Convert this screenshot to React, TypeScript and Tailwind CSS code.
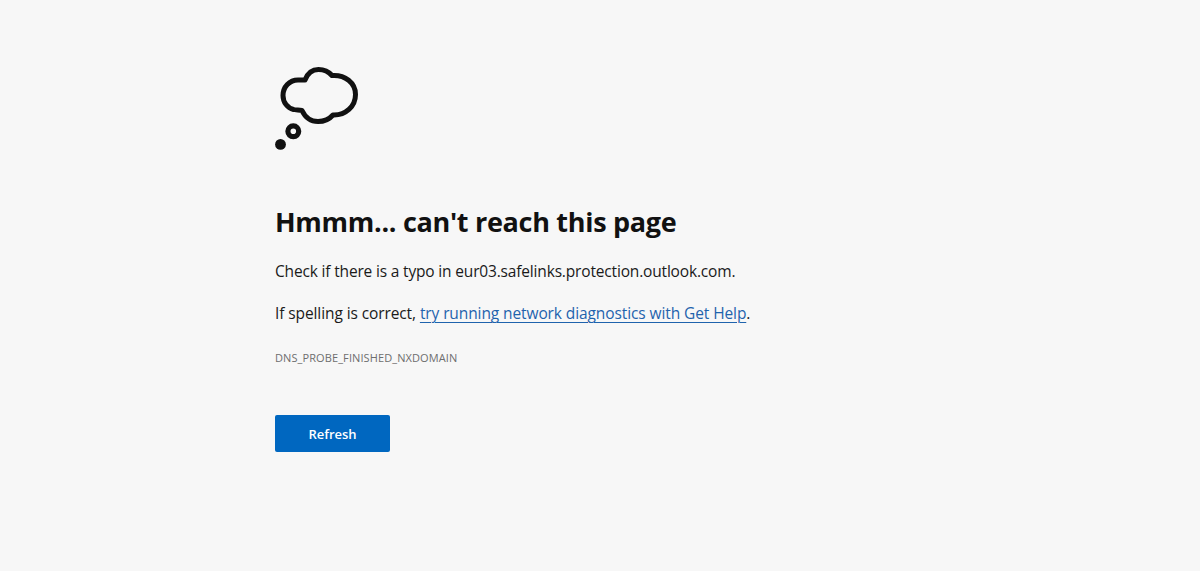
export default function App() {
  return (
    <div className="min-h-[571px] bg-[#f7f7f7] pl-[275px] pt-[67px] text-[#1a1a1a]" style={{ fontFamily: '"Open Sans", "Noto Sans", sans-serif' }}>
      <svg width="84" height="84" viewBox="275 67 84 84" className="block" fill="none">
        <path d="M305 80 C307.5 73.5 312.5 69.5 318.5 69.5 C324.5 69.5 329 72 332 75.5 C345 74.5 355.5 83 355.5 94.5 C355.5 106.5 345.5 115.5 333 115 C329.5 119 324.5 121.5 318 121.5 C310.5 121.5 305 117 302 110.5 C298 110 295 110 293.5 109.5 C287.5 108 283 102.5 283 95.5 C283 87 289.5 80 298 80 C300.5 80 303 80 305 80 Z" stroke="#111" strokeWidth="5" strokeLinejoin="round" />
        <circle cx="293.3" cy="131.3" r="5.4" stroke="#111" strokeWidth="5.2" />
        <circle cx="280.5" cy="144.4" r="5.4" fill="#111" />
      </svg>
      <h1 className="mt-[53px] text-[27px] leading-[36px] font-bold text-[#111] tracking-[-0.3px]">Hmmm... can't reach this page</h1>
      <p className="mt-[19px] text-[15.5px] leading-[24px] tracking-[-0.17px]">Check if there is a typo in eur03.safelinks.protection.outlook.com.</p>
      <p className="mt-[18px] text-[15.5px] leading-[24px] tracking-[-0.1px]">
        If spelling is correct, <a className="text-[#1f63ad] underline underline-offset-[3px] decoration-1" href="#">try running network diagnostics with Get Help</a>.
      </p>
      <p className="mt-[25px] text-[11px] leading-[16px] font-medium tracking-[0.1px] text-[#6e6e6e]">DNS_PROBE_FINISHED_NXDOMAIN</p>
      <button className="mt-[49px] block h-[37px] w-[115px] rounded-[2px] bg-[#0067c0] pt-[2px] text-[13px] font-semibold text-white">Refresh</button>
    </div>
  );
}
